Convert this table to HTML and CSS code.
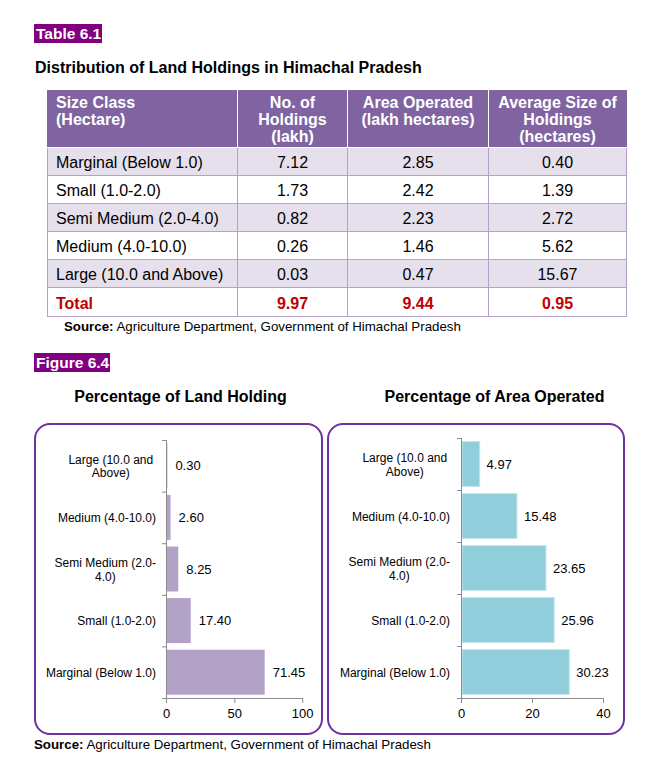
FILE: index.html
```html
<!DOCTYPE html>
<html lang="en">
<head>
<meta charset="utf-8">
<title>Distribution of Land Holdings in Himachal Pradesh</title>
<link rel="stylesheet" href="styles.css">
</head>
<body>
<div class="page">
  <div class="tag">Table 6.1</div>
  <h1 class="title">Distribution of Land Holdings in Himachal Pradesh</h1>
  <table class="data">
    <colgroup>
      <col class="c1"><col class="c2"><col class="c3"><col class="c4">
    </colgroup>
    <thead>
      <tr>
        <th class="left">Size Class<br>(Hectare)</th>
        <th>No. of<br>Holdings<br>(lakh)</th>
        <th>Area Operated<br>(lakh hectares)</th>
        <th>Average Size of<br>Holdings<br>(hectares)</th>
      </tr>
    </thead>
    <tbody>
      <tr class="alt"><td class="left">Marginal (Below 1.0)</td><td>7.12</td><td>2.85</td><td>0.40</td></tr>
      <tr><td class="left">Small (1.0-2.0)</td><td>1.73</td><td>2.42</td><td>1.39</td></tr>
      <tr class="alt"><td class="left">Semi Medium (2.0-4.0)</td><td>0.82</td><td>2.23</td><td>2.72</td></tr>
      <tr><td class="left">Medium (4.0-10.0)</td><td>0.26</td><td>1.46</td><td>5.62</td></tr>
      <tr class="alt"><td class="left">Large (10.0 and Above)</td><td>0.03</td><td>0.47</td><td>15.67</td></tr>
      <tr class="total"><td class="left">Total</td><td>9.97</td><td>9.44</td><td>0.95</td></tr>
    </tbody>
  </table>
  <p class="source table-source"><b>Source:</b> Agriculture Department, Government of Himachal Pradesh</p>

  <div class="tag fig-tag">Figure 6.4</div>
  <div class="charts">
    <section class="chart chart-left">
      <h2 class="chart-title">Percentage of Land Holding</h2>
      <div class="chart-box">
        <svg class="plot" width="285" height="308" viewBox="0 0 285 308">
          <g class="cats">
            <text x="74.8" y="38.8" text-anchor="middle">Large (10.0 and</text>
            <text x="74.8" y="52.3" text-anchor="middle">Above)</text>
            <text x="120" y="96.9" text-anchor="end">Medium (4.0-10.0)</text>
            <text x="69.3" y="142" text-anchor="middle">Semi Medium (2.0-</text>
            <text x="69.3" y="155.5" text-anchor="middle">4.0)</text>
            <text x="120" y="200.1" text-anchor="end">Small (1.0-2.0)</text>
            <text x="120" y="251.7" text-anchor="end">Marginal (Below 1.0)</text>
          </g>
          <g class="bars-purple">
            <rect x="131" y="18.3" width="0.41" height="45"/>
            <rect x="131" y="69.9" width="3.55" height="45"/>
            <rect x="131" y="121.5" width="11.28" height="45"/>
            <rect x="131" y="173.1" width="23.79" height="45"/>
            <rect x="131" y="224.7" width="97.67" height="45"/>
          </g>
          <g class="vals">
            <text x="139.4" y="45.3">0.30</text>
            <text x="142.6" y="96.9">2.60</text>
            <text x="150.3" y="148.5">8.25</text>
            <text x="162.8" y="200.1">17.40</text>
            <text x="236.7" y="251.7">71.45</text>
          </g>
          <g class="axis">
            <line x1="130.5" y1="15" x2="130.5" y2="273.5"/>
            <line x1="126" y1="15.5" x2="130.5" y2="15.5"/>
            <line x1="126" y1="67.1" x2="130.5" y2="67.1"/>
            <line x1="126" y1="118.7" x2="130.5" y2="118.7"/>
            <line x1="126" y1="170.3" x2="130.5" y2="170.3"/>
            <line x1="126" y1="221.9" x2="130.5" y2="221.9"/>
            <line x1="126" y1="273.5" x2="267.2" y2="273.5"/>
            <line x1="130.5" y1="273.5" x2="130.5" y2="278"/>
            <line x1="198.8" y1="273.5" x2="198.8" y2="278"/>
            <line x1="266.7" y1="273.5" x2="266.7" y2="278"/>
          </g>
          <g class="ticks">
            <text x="130.5" y="293" text-anchor="middle">0</text>
            <text x="198.8" y="293" text-anchor="middle">50</text>
            <text x="266.7" y="293" text-anchor="middle">100</text>
          </g>
        </svg>
      </div>
    </section>
    <section class="chart chart-right">
      <h2 class="chart-title">Percentage of Area Operated</h2>
      <div class="chart-box">
        <svg class="plot" width="294" height="308" viewBox="0 0 294 308">
          <g class="cats">
            <text x="75.8" y="37" text-anchor="middle">Large (10.0 and</text>
            <text x="75.8" y="50.5" text-anchor="middle">Above)</text>
            <text x="121" y="95.5" text-anchor="end">Medium (4.0-10.0)</text>
            <text x="70.3" y="141" text-anchor="middle">Semi Medium (2.0-</text>
            <text x="70.3" y="154.5" text-anchor="middle">4.0)</text>
            <text x="121" y="199.5" text-anchor="end">Small (1.0-2.0)</text>
            <text x="121" y="251.5" text-anchor="end">Marginal (Below 1.0)</text>
          </g>
          <g class="bars-blue">
            <rect x="133" y="16.5" width="17.64" height="45"/>
            <rect x="133" y="68.5" width="54.95" height="45"/>
            <rect x="133" y="120.5" width="83.96" height="45"/>
            <rect x="133" y="172.5" width="92.16" height="45"/>
            <rect x="133" y="224.5" width="107.32" height="45"/>
          </g>
          <g class="vals">
            <text x="157.6" y="43.5">4.97</text>
            <text x="195" y="95.5">15.48</text>
            <text x="224" y="147.5">23.65</text>
            <text x="232.2" y="199.5">25.96</text>
            <text x="247.3" y="251.5">30.23</text>
          </g>
          <g class="axis">
            <line x1="132.5" y1="13" x2="132.5" y2="273.5"/>
            <line x1="128" y1="13.5" x2="132.5" y2="13.5"/>
            <line x1="128" y1="65.5" x2="132.5" y2="65.5"/>
            <line x1="128" y1="117.5" x2="132.5" y2="117.5"/>
            <line x1="128" y1="169.5" x2="132.5" y2="169.5"/>
            <line x1="128" y1="221.5" x2="132.5" y2="221.5"/>
            <line x1="128" y1="273.5" x2="275" y2="273.5"/>
            <line x1="132.5" y1="273.5" x2="132.5" y2="278"/>
            <line x1="203.5" y1="273.5" x2="203.5" y2="278"/>
            <line x1="274.5" y1="273.5" x2="274.5" y2="278"/>
          </g>
          <g class="ticks">
            <text x="132.5" y="293" text-anchor="middle">0</text>
            <text x="203.5" y="293" text-anchor="middle">20</text>
            <text x="274.5" y="293" text-anchor="middle">40</text>
          </g>
        </svg>
      </div>
    </section>
  </div>
  <p class="source fig-source"><b>Source:</b> Agriculture Department, Government of Himachal Pradesh</p>
</div>
</body>
</html>
```

FILE: styles.css
```css
* { box-sizing: border-box; }

html, body {
  margin: 0;
  padding: 0;
  background: #ffffff;
}

body {
  font-family: "Liberation Sans", Arial, sans-serif;
  color: #000000;
}

.page {
  padding: 24px 0 0 34px;
  width: 672px;
}

.tag {
  width: fit-content;
  background: #800080;
  color: #ffffff;
  font-weight: bold;
  font-size: 15.5px;
  line-height: 19px;
  padding: 0 1px 0 2px;
}

.title {
  margin: 15px 0 0 1px;
  font-size: 16px;
  line-height: 19px;
  font-weight: bold;
}

.data {
  margin: 13px 0 0 13px;
  border-collapse: collapse;
  table-layout: fixed;
  width: 579px;
  font-size: 16px;
}

.c1 { width: 190px; }
.c2 { width: 110px; }
.c3 { width: 141px; }
.c4 { width: 138px; }

.data th {
  background: #8064a2;
  color: #ffffff;
  font-weight: bold;
  line-height: 17px;
  padding: 3px 4px 2px;
  vertical-align: top;
  text-align: center;
  border: 1px solid #ffffff;
  border-top-color: #8064a2;
}

.data th:first-child { border-left-color: #8064a2; }
.data th:last-child { border-right-color: #8064a2; }

.data td {
  line-height: 18px;
  height: 28px;
  padding: 6px 4px 3px;
  text-align: center;
  border: 1px solid #b3a2c7;
}

.data .left {
  text-align: left;
  padding-left: 8px;
}

.data tr.alt td { background: #e5e0ec; }

.data tr.total td {
  color: #c00000;
  font-weight: bold;
  height: 29px;
}

.source {
  margin: 0;
  font-size: 13.3px;
  line-height: 16px;
}

.table-source {
  margin: 2px 0 0 30px;
}

.fig-tag {
  margin-top: 18px;
}

.charts {
  display: flex;
  gap: 4px;
  margin-top: 15px;
}

.chart-title {
  margin: 0 0 17px;
  font-size: 16px;
  line-height: 19px;
  font-weight: bold;
  text-align: center;
}

.chart-left { width: 289px; }
.chart-left .chart-title { padding-left: 4px; }

.chart-right { width: 298px; }
.chart-right .chart-title { padding-left: 37px; }

.chart-box {
  border: 2px solid #7030a0;
  border-radius: 16px;
  height: 312px;
  background: #ffffff;
}

.plot {
  display: block;
  font-family: "Liberation Sans", Arial, sans-serif;
}

.cats text {
  font-size: 12px;
  fill: #000000;
}

.vals text,
.ticks text {
  font-size: 13px;
  fill: #000000;
}

.bars-purple rect { fill: #b3a2c7; }

.bars-blue rect {
  fill: #92cddc;
  stroke: #c4e5ee;
  stroke-width: 1;
}

.axis line {
  stroke: #8c8c8c;
  stroke-width: 1;
}

.fig-source {
  margin-top: 2px;
}
```
